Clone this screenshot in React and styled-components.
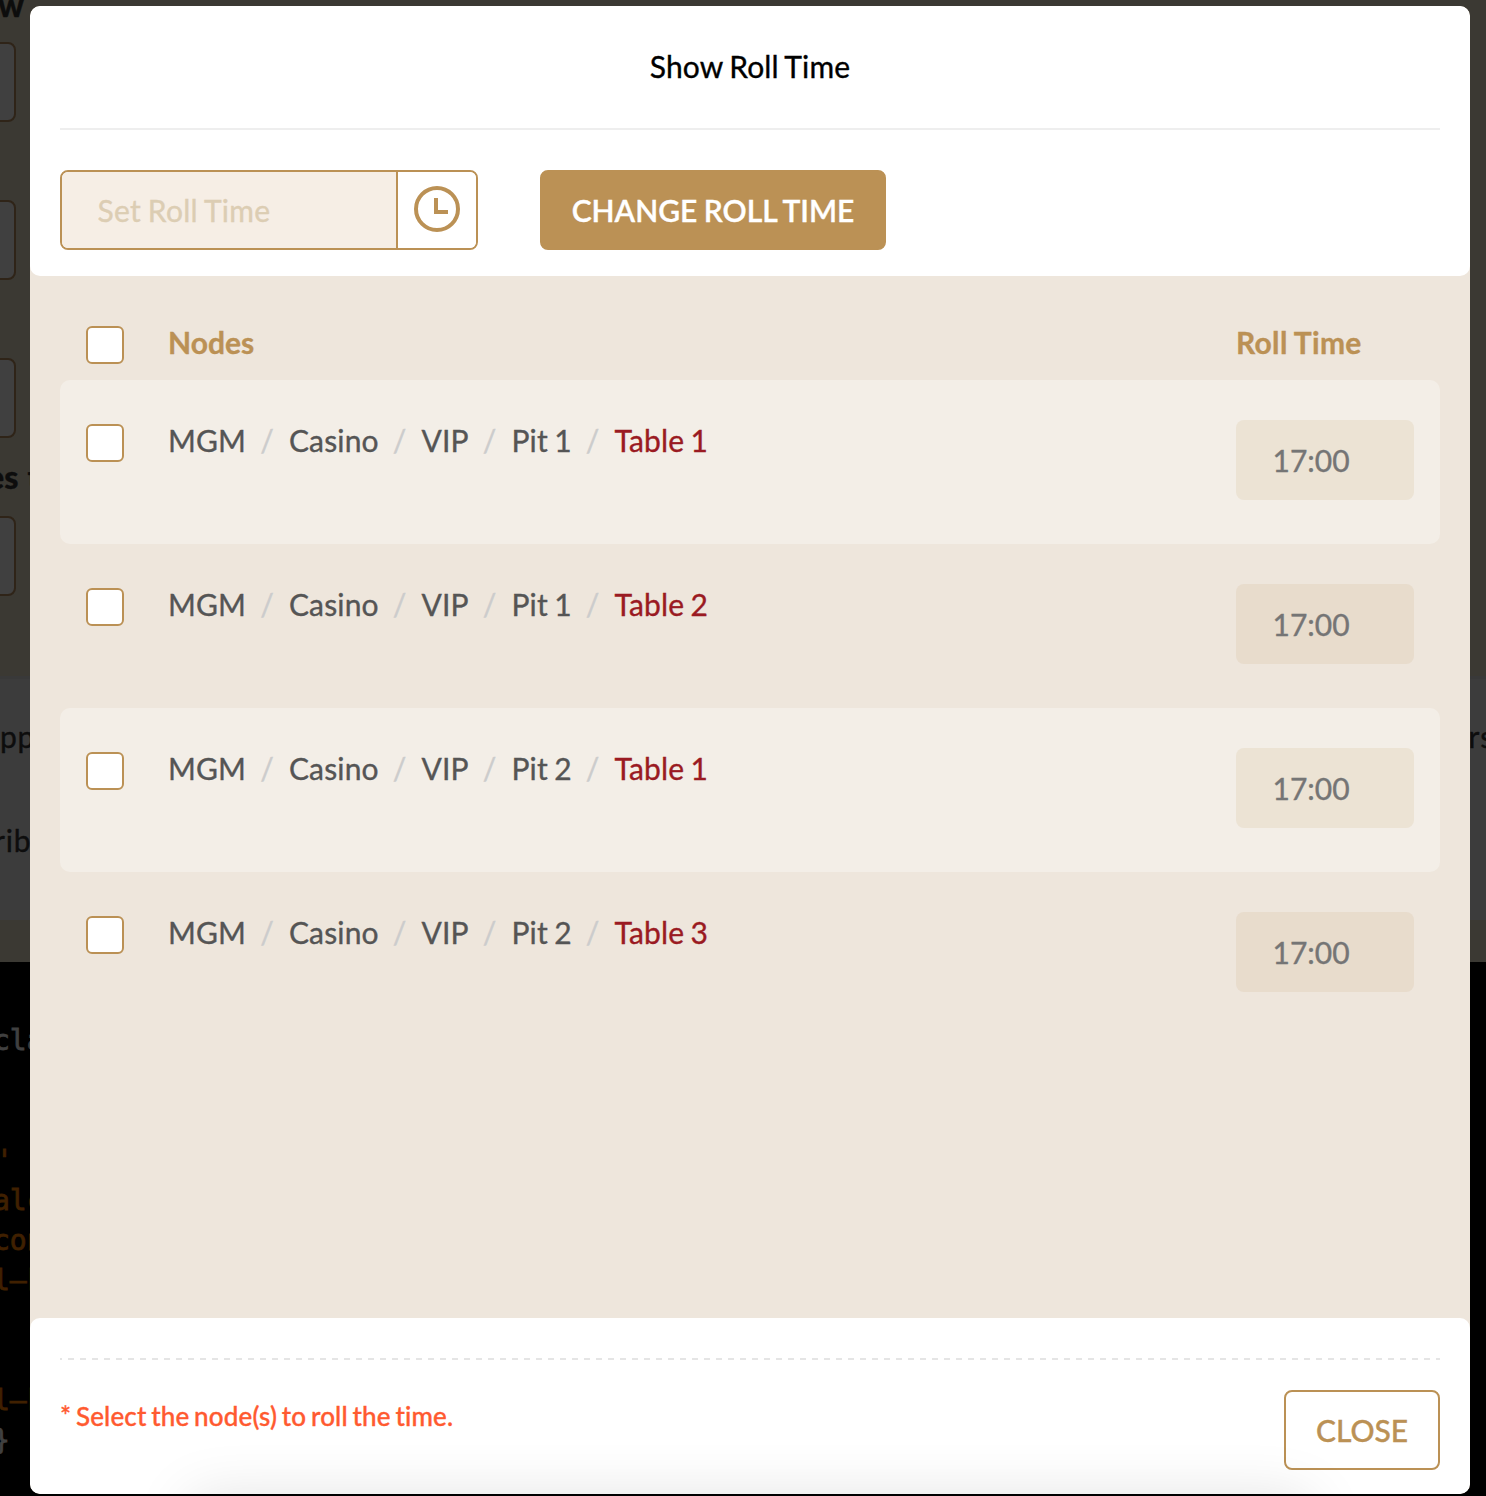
import React from "react";
import styled, { createGlobalStyle } from "styled-components";

const gold = "#bb9155";

const GlobalStyle = createGlobalStyle`
  * { box-sizing: border-box; }
  body { margin: 0; }
  button, input { font: inherit; letter-spacing: inherit; word-spacing: inherit; margin: 0; }
`;

const Screen = styled.div`
  position: relative;
  width: 1486px;
  height: 1496px;
  overflow: hidden;
  font-family: Lato, "Liberation Sans", sans-serif;
  font-size: 30px;
  line-height: 40px;
  letter-spacing: 0.17px;
  word-spacing: -1.6px;
  font-variant-ligatures: none;
  -webkit-text-stroke: 0.35px currentColor;
`;

const Page = styled.div`
  display: flex;
  flex-direction: column;
  height: 100%;
  overflow: hidden;
  background: #3b3933;
  color: #0d0d0d;
`;

const FormSection = styled.section`
  height: 676px;
  overflow: hidden;
`;

const FieldLabel = styled.div`
  height: ${(p) => p.$height}px;
  padding-top: ${(p) => p.$top}px;
  margin-left: ${(p) => p.$shift}px;
  font-size: 32px;
  line-height: ${(p) => p.$line}px;
  font-weight: 900;
  word-spacing: 1px;
  white-space: pre;
`;

const PageField = styled.div`
  width: 36px;
  height: 80px;
  margin: 0 0 ${(p) => p.$gap}px -20px;
  border: 2px solid #2f2418;
  border-radius: 8px;
  background: #404040;
`;

const Panel = styled.section`
  height: 244px;
  padding-top: 37px;
  background: #3c3c3c;
  border-top: 3px solid #393939;
`;

const PanelRow = styled.div`
  display: flex;
  justify-content: space-between;
  height: 104px;
  margin: 0 -8px 0 ${(p) => p.$shift}px;
  letter-spacing: 0.8px;
`;

const CodeBlock = styled.pre`
  flex: 1;
  margin: 42px 0 0;
  padding-top: 59px;
  background: #000;
  color: #404040;
  font: 28px/40px "DejaVu Sans Mono", "Liberation Mono", monospace;
  letter-spacing: 0;
  word-spacing: 0;
  -webkit-text-stroke: 0.8px currentColor;
`;

const CodeLine = styled.div`
  height: 40px;
  margin-left: ${(p) => p.$shift ?? -7}px;
  color: ${(p) => (p.$accent ? "#402000" : "inherit")};
`;

const Modal = styled.div`
  position: absolute;
  top: 6px;
  left: 30px;
  display: flex;
  flex-direction: column;
  width: 1440px;
  height: 1488px;
  overflow: hidden;
  border-radius: 10px;
  background: #eee6dc;
`;

const Header = styled.header`
  height: 270px;
  padding: 0 30px;
  border-radius: 10px;
  background: #fff;
`;

const Title = styled.h1`
  height: 124px;
  margin: 0;
  padding-top: 40px;
  border-bottom: 2px solid #eee;
  color: #000;
  font-size: 30px;
  font-weight: 400;
  text-align: center;
`;

const Toolbar = styled.div`
  display: flex;
  gap: 62px;
  padding-top: 40px;
`;

const TimePicker = styled.div`
  display: flex;
  width: 418px;
  height: 80px;
  overflow: hidden;
  border: 2px solid ${gold};
  border-radius: 8px;
`;

const TimeInput = styled.input`
  width: 334px;
  padding: 0 35.5px;
  border: 0;
  outline: 0;
  background: #f6eee5;
  letter-spacing: 0.25px;
  word-spacing: -1px;
  &::placeholder { color: #dccdb3; opacity: 1; }
`;

const ClockButton = styled.button`
  display: flex;
  flex: 1;
  padding: 14px 0 0 16px;
  border: 0;
  border-left: 2px solid ${gold};
  background: #fff;
`;

const Button = styled.button`
  width: ${(p) => p.$width}px;
  height: 80px;
  padding: 0;
  border: 2px solid ${gold};
  border-radius: 8px;
  background: ${(p) => (p.$filled ? gold : "transparent")};
  color: ${(p) => (p.$filled ? "#fff" : gold)};
  font-weight: ${(p) => (p.$filled ? 600 : 500)};
  letter-spacing: 0;
  word-spacing: -1px;
  text-align: center;
  white-space: nowrap;
`;

const List = styled.main`
  height: 1042px;
  padding: 10px 30px 0;
`;

const Row = styled.div`
  display: grid;
  grid-template-columns: 82px 1fr 178px;
  align-items: start;
  height: 164px;
  padding: 40px 26px 0;
  border-radius: 10px;
  background: ${(p) => (p.$striped ? "#f3eee7" : "transparent")};
`;

const HeadRow = styled(Row)`
  height: 94px;
  padding-top: 36px;
  color: ${gold};
  font-weight: 700;
`;

const Checkbox = styled.input.attrs({ type: "checkbox" })`
  appearance: none;
  width: 38px;
  height: 38px;
  margin-top: 4px;
  border: 2px solid ${gold};
  border-radius: 6px;
  background: #fff;
`;

const HeadCell = styled.div`
  letter-spacing: ${(p) => (p.$wide ? 0.3 : 0)}px;
  word-spacing: -0.5px;
`;

const Crumbs = styled.div`
  display: flex;
  color: #555;
`;

const Crumb = styled.span`
  color: ${(p) => (p.$active ? "#9a1a22" : "inherit")};
  &:not(:first-child)::before {
    content: "/";
    padding: 0 15px 0 14px;
    color: #ccc;
  }
`;

const TimeValue = styled.div`
  height: 80px;
  padding: 20px 0 0 36.5px;
  border-radius: 8px;
  background: ${(p) => (p.$striped ? "#ece3d4" : "#e8dccc")};
  color: #757575;
  letter-spacing: 0;
`;

const Footer = styled.footer`
  position: relative;
  height: 176px;
  padding: 40px 30px 0;
  overflow: hidden;
  border-radius: 10px;
  background: #fff;
  &::after {
    content: "";
    position: absolute;
    top: 180px;
    left: 160px;
    right: 160px;
    height: 100px;
    box-shadow: 0 0 60px rgba(0, 0, 0, 0.12);
  }
`;

const DashedRule = styled.div`
  height: 2px;
  background: repeating-linear-gradient(90deg, #e5e5e5 0 2px, transparent 2px 8px, #e5e5e5 8px 12px);
`;

const FooterRow = styled.div`
  display: flex;
  justify-content: space-between;
  padding-top: 30px;
`;

const Notice = styled.p`
  margin: 6px 0 0;
  color: #ff5a30;
  font-size: 26px;
  font-weight: 500;
  letter-spacing: 0.15px;
  word-spacing: -2px;
`;

const rows = [
  ["Pit 1", "Table 1"],
  ["Pit 1", "Table 2"],
  ["Pit 2", "Table 1"],
  ["Pit 2", "Table 3"],
];

function ClockIcon() {
  return (
    <svg width="46" height="46" viewBox="0 0 46 46" fill="none" stroke={gold} strokeWidth="4">
      <circle cx="23" cy="23" r="21" />
      <path d="M22 12v14h12" />
    </svg>
  );
}

function BackgroundPage() {
  return (
    <Page>
      <FormSection>
        <FieldLabel $height={42} $top={0} $line={10} $shift={-2}>w</FieldLabel>
        <PageField $gap={78} />
        <PageField $gap={78} />
        <PageField $gap={0} />
        <FieldLabel $height={78} $top={19} $line={40} $shift={-13}>es t</FieldLabel>
        <PageField $gap={0} />
      </FormSection>
      <Panel>
        <PanelRow $shift={0}><span>pp</span><span>rs</span></PanelRow>
        <PanelRow $shift={-6}><span>rib</span></PanelRow>
      </Panel>
      <CodeBlock>
        <CodeLine>cla</CodeLine>
        <CodeLine />
        <CodeLine />
        <CodeLine $accent $shift={-4}>'</CodeLine>
        <CodeLine $accent>alc</CodeLine>
        <CodeLine $accent>con</CodeLine>
        <CodeLine $accent>l–k</CodeLine>
        <CodeLine />
        <CodeLine />
        <CodeLine $accent>l–k</CodeLine>
        <CodeLine>{"}"}</CodeLine>
      </CodeBlock>
    </Page>
  );
}

export default function App() {
  return (
    <Screen>
      <GlobalStyle />
      <BackgroundPage />
      <Modal role="dialog">
        <Header>
          <Title>Show Roll Time</Title>
          <Toolbar>
            <TimePicker>
              <TimeInput placeholder="Set Roll Time" />
              <ClockButton><ClockIcon /></ClockButton>
            </TimePicker>
            <Button $filled $width={346}>CHANGE ROLL TIME</Button>
          </Toolbar>
        </Header>
        <List>
          <HeadRow>
            <Checkbox />
            <HeadCell>Nodes</HeadCell>
            <HeadCell $wide>Roll Time</HeadCell>
          </HeadRow>
          {rows.map(([pit, table], i) => (
            <Row key={i} $striped={i % 2 === 0}>
              <Checkbox />
              <Crumbs>
                <Crumb>MGM</Crumb>
                <Crumb>Casino</Crumb>
                <Crumb>VIP</Crumb>
                <Crumb>{pit}</Crumb>
                <Crumb $active>{table}</Crumb>
              </Crumbs>
              <TimeValue $striped={i % 2 === 0}>17:00</TimeValue>
            </Row>
          ))}
        </List>
        <Footer>
          <DashedRule />
          <FooterRow>
            <Notice>* Select the node(s) to roll the time.</Notice>
            <Button $width={156}>CLOSE</Button>
          </FooterRow>
        </Footer>
      </Modal>
    </Screen>
  );
}
